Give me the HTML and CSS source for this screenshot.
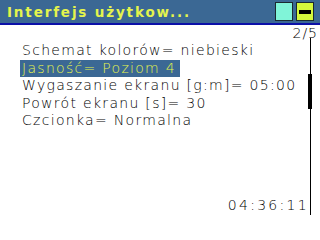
FILE: index.html
```html
<!DOCTYPE html>
<html lang="pl">
<head>
    <meta charset="UTF-8">
    <meta name="viewport" content="width=device-width, initial-scale=1.0">
    <title>Interfejs użytkownika</title>
    <link rel="stylesheet" href="styles.css">
</head>
<body>
    <div class="screen">
        <!-- title bar with the two status boxes -->
        <header class="titlebar">
            <span class="title">Interfejs użytkow...</span>
            <span class="box box-cyan"></span>
            <span class="box box-yellow"><span class="bar"></span></span>
        </header>
        <div class="page-no">2/5</div>
        <div class="body">
            <div class="main">
                <ul class="menu">
                    <li>Schemat kolorów= niebieski</li>
                    <li class="selected">Jasność= Poziom 4</li>
                    <li>Wygaszanie ekranu [g:m]= 05:00</li>
                    <li>Powrót ekranu [s]= 30</li>
                    <li>Czcionka= Normalna</li>
                </ul>
                <div class="clock">04:36:11</div>
            </div>
            <!-- scroll track -->
            <div class="track"><div class="thumb"></div></div>
        </div>
    </div>
</body>
</html>
```

FILE: styles.css
```css
body {
    margin: 0;
    background-color: #ffffff;
    font-family: "DejaVu Sans", Verdana, sans-serif;
}

.screen {
    width: 320px;
    height: 240px;
    display: flex;
    flex-direction: column;
    overflow: hidden;
}

.titlebar {
    height: 23px;
    background-color: #3b6894;
    border-bottom: 2px solid #0c10a8;
    display: flex;
    align-items: center;
    padding: 0 6px 0 7px;
}

.title {
    flex: 1;
    color: #e4f44c;
    font-weight: bold;
    font-size: 13.5px;
    letter-spacing: 1.85px;
    white-space: nowrap;
}

.box {
    width: 16px;
    height: 17px;
    border: 1px solid #1a2a30;
    margin-left: 3px;
    display: flex;
    align-items: center;
    justify-content: center;
}

.box-cyan {
    background-color: #80f4d8;
}

.box-yellow {
    background-color: #d4f83c;
}

.bar {
    width: 12px;
    height: 4px;
    background-color: #000000;
}

.page-no {
    text-align: right;
    font-size: 14px;
    font-weight: 200;
    letter-spacing: 1px;
    line-height: 14px;
    padding: 1px 2px 0 0;
    height: 12px;
    color: #000000;
}

.body {
    flex: 1;
    display: flex;
    padding-bottom: 25px;
}

.main {
    flex: 1;
    display: flex;
    flex-direction: column;
    padding: 4px 1px 0 20px;
}

.menu {
    list-style: none;
    margin: 0;
    padding: 0;
    font-size: 14px;
    font-weight: 200;
    letter-spacing: 1.3px;
}

.menu li {
    height: 17.5px;
    line-height: 17.5px;
    padding-left: 2px;
    white-space: nowrap;
}

.menu li.selected {
    display: table;
    background-color: #3b6894;
    color: #e4f44c;
    padding-right: 4px;
}

.clock {
    margin-top: auto;
    margin-bottom: 2px;
    text-align: right;
    font-size: 14px;
    font-weight: 200;
    letter-spacing: 2.3px;
}

.track {
    width: 1px;
    background-color: #000000;
    margin-right: 9px;
    position: relative;
}

.thumb {
    position: absolute;
    left: -2px;
    top: 36px;
    width: 4px;
    height: 35px;
    background-color: #000000;
}
```
